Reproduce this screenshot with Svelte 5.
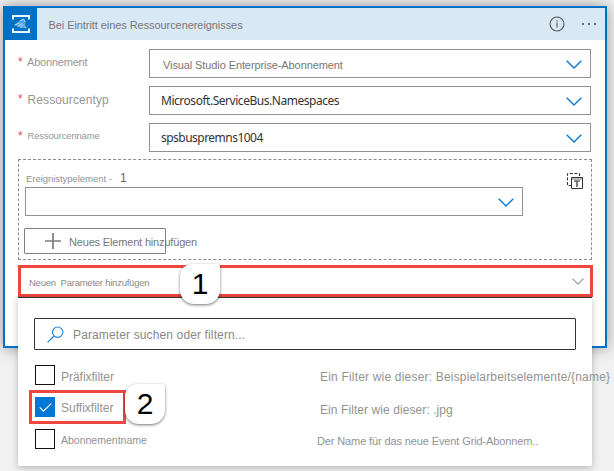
<script>
  const fields = [
    { label: 'Abonnement', value: 'Visual Studio Enterprise-Abonnement', kind: 'subscription' },
    { label: 'Ressourcentyp', value: 'Microsoft.ServiceBus.Namespaces', kind: 'type' },
    { label: 'Ressourcenname', value: 'spsbuspremns1004', kind: 'name' }
  ];
  let options = $state([
    { label: 'Präfixfilter', hint: 'Ein Filter wie dieser: Beispielarbeitselemente/{name}', kind: 'prefix', checked: false },
    { label: 'Suffixfilter', hint: 'Ein Filter wie dieser: .jpg', kind: 'suffix', checked: true },
    { label: 'Abonnementname', hint: 'Der Name für das neue Event Grid-Abonnem..', kind: 'subname', checked: false }
  ]);
</script>

{#snippet chevron()}
  <svg class="chevron" width="16" height="10" viewBox="0 0 16 10"><path d="M.7.8 8 8.1 15.3.8" /></svg>
{/snippet}

<main>
  <section class="card">
    <header>
      <div class="logo">
        <svg width="20" height="20" viewBox="0 0 20 20" fill="none">
          <path d="M2 5.4V2h16v3.4M2 14.6V18h16v-3.4" stroke="#eaf5fc" stroke-width="2" />
          <path d="M3.5 11 8.5 6.6l4-1.8 2.3 3-.9 3.6 1.4 2.8-6-.2-2.6-1.6z" fill="#4fa3dd" />
          <path d="m3.6 11 5.4-2.2M6.6 12.6l4.6-3.2M9.5 13.8l2.6-3.4M9.4 6.6l3.2-1.6 1.6 3M13 11.6l2.4 2.4" stroke="#b5daf2" stroke-width="1" />
        </svg>
      </div>
      <h1>Bei Eintritt eines Ressourcenereignisses</h1>
      <svg class="info" width="16" height="16" viewBox="0 0 16 16" fill="none" stroke="#555">
        <circle cx="8" cy="8" r="7" stroke-width="1.1" />
        <path d="M8 6.6v5M8 4.2v1.3" stroke-width="1.1" />
      </svg>
      <div class="dots"><i></i><i></i><i></i></div>
    </header>
    <div class="body">
      {#each fields as f}
        <div class="row {f.kind}">
          <span class="star">*</span>
          <span class="label">{f.label}</span>
          <div class="select"><span class="value">{f.value}</span>{@render chevron()}</div>
        </div>
      {/each}
      <div class="group">
        <div class="group-main">
          <div class="group-label"><span>Ereignistypelement&nbsp;-</span><b>1</b></div>
          <div class="select wide">{@render chevron()}</div>
          <button>
            <svg width="16" height="16" viewBox="0 0 16 16"><path d="M8 0v16M0 8h16" stroke="#7c7c7c" stroke-width="1.7" /></svg>
            <span>Neues Element hinzufügen</span>
          </button>
        </div>
        <svg class="toggle" width="16" height="16" viewBox="0 0 16 16" fill="none">
          <path d="M12.5 3V.5H.5v12H4" stroke="#333" stroke-dasharray="3 1.6" />
          <path d="M4.5 4.5h11v11h-11z" fill="#fff" stroke="#333" />
          <path d="M5 6h10" stroke="#bbb" stroke-width="2" />
          <path d="M7 8h6M10 8v6" stroke="#666" stroke-width="1.7" />
        </svg>
      </div>
      <div class="add">
        <span>Neuen&nbsp; Parameter hinzufügen</span>
        <svg width="12" height="8" viewBox="0 0 12 8"><path d="m.5.7 5.5 5.5L11.5.7" fill="none" stroke="#999" stroke-width="1.2" /></svg>
      </div>
    </div>
  </section>

  <section class="menu">
    <div class="search">
      <svg width="17" height="17" viewBox="0 0 17 17" fill="none" stroke="#1a80d8" stroke-width="1.1">
        <circle cx="10.7" cy="6.2" r="5.2" /><path d="M7 10 .6 16.4" />
      </svg>
      <span>Parameter suchen oder filtern...</span>
    </div>
    {#each options as o}
      <div class="option {o.kind}">
        <button class="check" class:on={o.checked} aria-label={o.label} onclick={() => (o.checked = !o.checked)}>
          {#if o.checked}
            <svg width="13" height="9" viewBox="0 0 13 9"><path d="m.7 4.4 3.7 3.7L12.2.6" fill="none" stroke="#fff" stroke-width="1.2" /></svg>
          {/if}
        </button>
        <span class="name">{o.label}</span>
        <span class="hint">{o.hint}</span>
      </div>
    {/each}
  </section>
  <div class="mark"></div>
  <div class="badge one">1</div>
  <div class="badge two">2</div>
</main>

<style>
  :global(body) { background: #f1f1f1; }
  * { box-sizing: border-box; }
  main {
    position: relative; width: 614px; height: 471px; overflow: hidden;
    padding: 6px 7px 0 3px; background: #f1f1f1; color: #858585;
    font: 11px/14px 'Liberation Sans', Arial, sans-serif; white-space: nowrap;
  }
  svg { display: block; flex: none; }
  .card { height: 342px; border: 2px solid #0072c6; background: #fff; box-shadow: 0 0 14px rgba(0, 0, 0, .38); }
  header { display: flex; height: 32px; align-items: center; background: #d8e9f5; }
  .logo { display: flex; width: 32px; height: 32px; align-items: center; justify-content: center; background: #0072c6; }
  h1 { margin: 2px auto 0 11.5px; font-size: 11px; font-weight: 400; letter-spacing: -.07px; color: #777; }
  .info { margin-right: 17px; }
  .dots { display: flex; gap: 4px; margin-right: 9px; }
  .dots i { width: 2px; height: 2px; background: #666; }
  .body { padding: 9px 12px 0 13px; }
  .row { display: flex; height: 29px; margin-bottom: 8px; }
  .star { width: 9px; font-size: 12px; line-height: 26px; color: #e8505b; }
  .label { width: 122px; color: #969696; }
  .subscription .label { line-height: 26px; letter-spacing: -.2px; }
  .type .label { font-size: 12px; line-height: 28px; letter-spacing: .1px; padding-left: .5px; }
  .name .label { font-size: 9.5px; line-height: 26px; letter-spacing: -.17px; padding-left: .5px; }
  .select { display: flex; width: 442px; height: 29px; padding: 0 8px 0 11px; justify-content: space-between; border: 1px solid #919191; background: #fff; }
  .value { font: 12px/28px 'Noto Sans', 'Open Sans', sans-serif; letter-spacing: -.47px; color: #333; }
  .name .value { letter-spacing: -.52px; }
  .subscription .value { padding-left: 2px; font: 11px/30px 'Liberation Sans', Arial, sans-serif; letter-spacing: -.1px; color: #777; }
  .chevron { margin-top: 10px; fill: none; stroke: #0f7ad3; stroke-width: 1.4; }
  .group { display: flex; width: 574px; height: 101px; margin-top: -1px; justify-content: space-between; border: 1px dashed #8d8d8d; }
  .group-main { padding: 12px 0 0 6px; }
  .group-label { display: flex; height: 15px; padding-left: 1px; font-size: 9.5px; line-height: 14px; letter-spacing: -.04px; color: #929292; }
  .group-label span { width: 87px; }
  .group-label b { margin: -1px 0 0 7px; font-size: 12px; font-weight: 400; color: #666; }
  .wide { width: 498px; justify-content: flex-end; }
  .group button { display: flex; width: 142px; height: 26px; margin: 12px 0 0 -1px; padding: 0 0 0 20px; align-items: center; border: 1px solid #808080; border-radius: 1px; background: #fff; color: #777; font: inherit; letter-spacing: -.17px; text-align: left; }
  .group button span { margin: 1px 0 0 8px; }
  .toggle { margin: 13px 8px 0 0; }
  .add { display: flex; width: 575px; height: 32px; margin-top: 5px; padding: 0 6px 0 8px; justify-content: space-between; align-items: center; border: 3px solid #ed4740; color: #888; font-size: 9.5px; letter-spacing: -.24px; }
  .add span { margin-top: 4px; }
  .add svg { margin-top: 2px; }
  .menu { position: absolute; left: 18px; top: 297px; width: 574px; height: 169px; padding: 20px 0 0 16px; border-top: 1px solid #333; border-radius: 0 0 2px 2px; background: #fff; box-shadow: 0 2px 7px rgba(0, 0, 0, .25); }
  .search { display: flex; width: 542px; height: 32px; margin-bottom: 15px; padding: 0 0 0 12px; align-items: center; border: 1px solid #333; border-radius: 1px; color: #888; font-size: 12px; letter-spacing: .13px; }
  .search span { margin: 2px 0 0 9px; }
  .option { display: flex; height: 20px; margin: 0 0 12px 1px; color: #929292; font-size: 12px; line-height: 24px; }
  .check { display: flex; flex: none; width: 20px; height: 20px; margin: 0 6px 0 0; padding: 0; align-items: center; justify-content: center; border: 1px solid #111; background: #fff; }
  .check.on { border: 0; background: #0078d7; }
  .option .name { flex: none; width: 259px; }
  .prefix .name { letter-spacing: -.03px; }
  .prefix .hint { letter-spacing: .19px; }
  .suffix .name { line-height: 22px; }
  .suffix .hint { line-height: 26px; letter-spacing: .08px; }
  .subname .name { width: 256px; font-size: 10.5px; line-height: 23px; }
  .subname .hint { font-size: 11px; letter-spacing: -.12px; }
  .mark { position: absolute; left: 29px; top: 390px; width: 97px; height: 34px; border: 3px solid #ed4740; }
  .badge { position: absolute; width: 40px; height: 40px; background: #fff; color: #000; font-size: 30px; line-height: 40px; text-align: center; box-shadow: 0 1px 3px rgba(0, 0, 0, .55); }
  .one { left: 180px; top: 264px; border-radius: 12px 3px 14px 14px; }
  .two { left: 125px; top: 384px; border-radius: 12px 3px 14px 14px; }
</style>
